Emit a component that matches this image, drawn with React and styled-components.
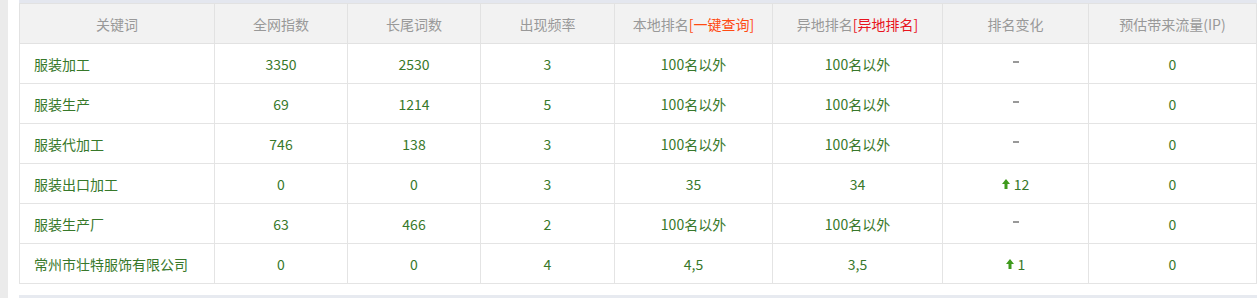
import React from "react";
import styled, { createGlobalStyle } from "styled-components";

const GlobalStyle = createGlobalStyle`
  html, body {
    margin: 0;
    padding: 0;
    background: #fff;
    font-family: "Noto Sans CJK SC", "Liberation Sans", sans-serif;
  }
`;

const columns = [
  { title: "关键词", width: 195 },
  { title: "全网指数", width: 133 },
  { title: "长尾词数", width: 133 },
  { title: "出现频率", width: 134 },
  { title: "本地排名", link: "[一键查询]", linkColor: "#ff4a12", width: 158 },
  { title: "异地排名", link: "[异地排名]", linkColor: "#e8141e", width: 170 },
  { title: "排名变化", width: 146 },
  { title: "预估带来流量(IP)", width: 168 },
];

const rows = [
  ["服装加工", "3350", "2530", "3", "100名以外", "100名以外", null, "0"],
  ["服装生产", "69", "1214", "5", "100名以外", "100名以外", null, "0"],
  ["服装代加工", "746", "138", "3", "100名以外", "100名以外", null, "0"],
  ["服装出口加工", "0", "0", "3", "35", "34", 12, "0"],
  ["服装生产厂", "63", "466", "2", "100名以外", "100名以外", null, "0"],
  ["常州市壮特服饰有限公司", "0", "0", "4", "4,5", "3,5", 1, "0"],
];

function UpArrow() {
  return (
    <svg width="8" height="10" viewBox="0 0 8 10">
      <path d="M4 0 L8 5 L5.5 5 L5.5 10 L2.5 10 L2.5 5 L0 5 Z" fill="#3f9a1c" />
    </svg>
  );
}

export default function App() {
  return (
    <>
      <GlobalStyle />
      <Page>
        <SideStrip />
        <Main>
          <TopBand />
          <Table>
            <colgroup>
              {columns.map((c, i) => (
                <col key={i} style={{ width: c.width }} />
              ))}
            </colgroup>
            <thead>
              <tr>
                {columns.map((c, i) => (
                  <Th key={i}>
                    {c.title}
                    {c.link && <HeadLink $color={c.linkColor}>{c.link}</HeadLink>}
                  </Th>
                ))}
              </tr>
            </thead>
            <tbody>
              {rows.map((r, i) => (
                <tr key={i}>
                  {r.map((v, j) => {
                    if (j === 0) return <KeywordCell key={j}>{v}</KeywordCell>;
                    if (j === 6) {
                      return (
                        <Td key={j}>
                          {v === null ? (
                            <Dash />
                          ) : (
                            <Change>
                              <UpArrow />
                              {v}
                            </Change>
                          )}
                        </Td>
                      );
                    }
                    return <Td key={j}>{v}</Td>;
                  })}
                </tr>
              ))}
            </tbody>
          </Table>
          <BottomBand />
        </Main>
      </Page>
    </>
  );
}

const Page = styled.div`
  display: flex;
  height: 298px;
  overflow: hidden;
`;

const SideStrip = styled.div`
  width: 8px;
  background: #ebebeb;
  margin-right: 11px;
  flex-shrink: 0;
`;

const Main = styled.div`
  width: 1238px;
  display: flex;
  flex-direction: column;
`;

const TopBand = styled.div`
  height: 5px;
  background: #e4e7ef;
`;

const BottomBand = styled.div`
  height: 4px;
  margin-top: 11px;
  background: #e7eaf0;
`;

const Table = styled.table`
  width: 1238px;
  table-layout: fixed;
  border-collapse: collapse;
  font-size: 14px;
`;

const Th = styled.th`
  height: 39px;
  padding: 0;
  background: #f2f2f2;
  border: 1px solid #e2e2e2;
  color: #999;
  font-weight: normal;
  text-align: center;
  white-space: nowrap;
`;

const HeadLink = styled.span`
  color: ${(p) => p.$color};
`;

const Td = styled.td`
  height: 39px;
  padding: 0;
  border: 1px solid #e4e4e4;
  color: #37782a;
  text-align: center;
  white-space: nowrap;
`;

const KeywordCell = styled(Td)`
  text-align: left;
  padding-left: 14px;
`;

const Dash = styled.span`
  display: inline-block;
  width: 6px;
  height: 2px;
  background: #999;
  vertical-align: middle;
  position: relative;
  top: -4px;
`;

const Change = styled.span`
  display: inline-flex;
  align-items: center;
  gap: 4px;
`;
